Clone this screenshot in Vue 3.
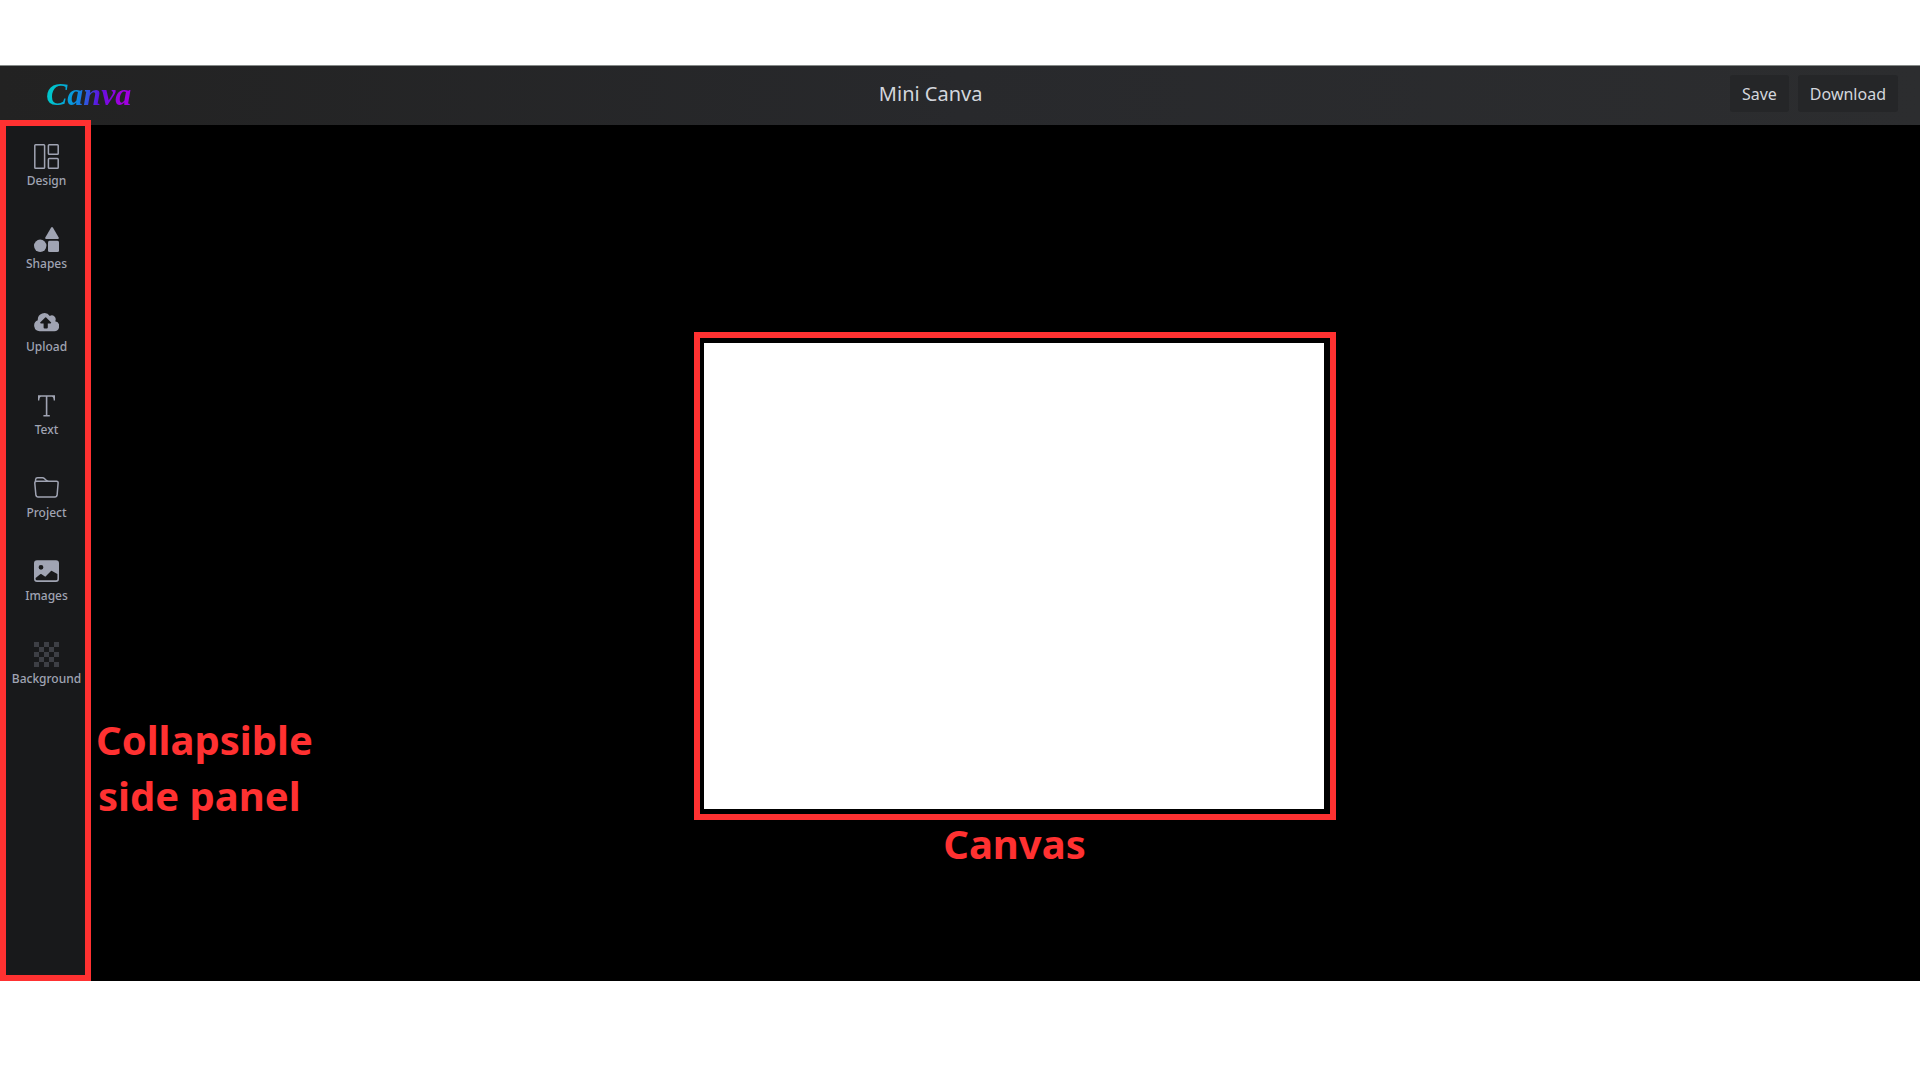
<script setup>
const tools = [
  { id: 'design', label: 'Design' },
  { id: 'shapes', label: 'Shapes' },
  { id: 'upload', label: 'Upload' },
  { id: 'text', label: 'Text' },
  { id: 'project', label: 'Project' },
  { id: 'images', label: 'Images' },
  { id: 'background', label: 'Background' },
]

// Filled squares of the 5 x 5 transparency checkerboard
const checks = Array.from({ length: 25 }, (_, i) => i)
  .filter((i) => i % 2 === 0)
  .map((i) => ({ x: (i % 5) * 5, y: Math.floor(i / 5) * 5 }))
</script>

<template>
  <div class="page">
    <header class="topbar">
      <a class="logo" href="#">Canva</a>
      <h1 class="title">Mini Canva</h1>
      <div class="actions">
        <button type="button">Save</button>
        <button type="button">Download</button>
      </div>
    </header>

    <div class="editor">
      <nav class="panel" aria-label="Tools">
        <button v-for="tool in tools" :key="tool.id" type="button" class="tool">
          <svg viewBox="0 0 25 25" aria-hidden="true">
            <g v-if="tool.id === 'design'" fill="none" stroke="currentColor" stroke-width="1.5">
              <rect x="0.8" y="0.8" width="9.8" height="23.4" rx="0.8" />
              <rect x="14.4" y="0.8" width="9.8" height="9.4" rx="0.8" />
              <rect x="14.4" y="14.6" width="9.8" height="9.6" rx="0.8" />
            </g>
            <g v-else-if="tool.id === 'shapes'" fill="currentColor">
              <path d="M17 .8Q18 -.6 19 .8L24.7 10.6Q25.2 12 23.8 12H12.2Q10.8 12 11.3 10.6Z" />
              <circle cx="6.2" cy="18.8" r="6.2" />
              <rect x="14" y="13.8" width="11" height="11.2" rx="1.5" />
            </g>
            <path
              v-else-if="tool.id === 'upload'"
              fill="currentColor"
              fill-rule="evenodd"
              d="M5.7 21.2A5.7 5.7 0 0 1 3.8 10.2A6.6 6.6 0 0 1 15.8 5.9A4 4 0 0 1 21.2 11.3A5 5 0 0 1 20 21.2ZM11.2 7.4L6.4 12.2Q5.7 13.2 6.8 13.4H9.6V17.4Q9.6 18.4 10.6 18.4H12.8Q13.8 18.4 13.8 17.4V13.4H16.5Q17.7 13.2 16.9 12.2L12.2 7.4Q11.7 7 11.2 7.4Z"
            />
            <path
              v-else-if="tool.id === 'text'"
              fill="currentColor"
              d="M4 2.2H21V7.5H19.7Q19.6 4 17.8 3.8H13.4V22H15.8V23.5H9.4V22H11.8V3.8H7.2Q5.4 4 5.3 7.5H4Z"
            />
            <g v-else-if="tool.id === 'project'" fill="none" stroke="currentColor" stroke-width="1.5">
              <path d="M2.7 5.2H22.5Q24.3 5.3 24.1 7.2L23.1 19.2Q22.9 20.9 21.2 20.9H3.8Q2.1 20.9 1.9 19.2L.8 7.2Q.7 5.3 2.7 5.2Z" />
              <path d="M1.5 5.7L1.6 3.5Q1.8 1.7 3.6 1.7H8.5Q9.6 1.7 10.4 2.5L11.6 3.7Q13 5.1 14.3 5.2" />
            </g>
            <path
              v-else-if="tool.id === 'images'"
              fill="currentColor"
              fill-rule="evenodd"
              d="M3 1.2H22Q25 1.2 25 4.2V19.9Q25 22.9 22 22.9H3Q0 22.9 0 19.9V4.2Q0 1.2 3 1.2ZM7 5.9A2.4 2.4 0 1 0 7 10.7A2.4 2.4 0 1 0 7 5.9ZM1.6 19V19.9Q1.6 21.3 3 21.3H22Q23.4 21.3 23.4 19.9V14.9L18 11.9Q17.5 11.7 17 12.1L11.3 17.8L7.2 15.1Q6.7 14.8 6.2 15.2Z"
            />
            <g v-else fill="#3d3f45">
              <rect v-for="c in checks" :key="`${c.x}-${c.y}`" :x="c.x" :y="c.y" width="5" height="5" />
            </g>
          </svg>
          <span>{{ tool.label }}</span>
        </button>
      </nav>

      <main class="workspace">
        <figure class="stage">
          <canvas class="artboard" width="620" height="466"></canvas>
          <figcaption class="note">Canvas</figcaption>
        </figure>
      </main>

      <p class="note panel-note">{{ 'Collapsible\nside panel ' }}</p>
    </div>
  </div>
</template>

<style>
body {
  margin: 0;
  background: #fff;
}
</style>

<style scoped>
.page {
  box-sizing: border-box;
  display: flex;
  flex-direction: column;
  min-height: 100vh;
  padding: 65px 0 99px;
  font-family: 'Noto Sans', 'Open Sans', sans-serif;
}

.topbar {
  box-sizing: border-box;
  display: flex;
  align-items: center;
  justify-content: space-between;
  height: 60px;
  padding: 0 22px 4px 46px;
  border-top: 1px solid #858a88;
  background: linear-gradient(90deg, #222222, #28292c 50%, #2c2d2f);
}

.logo {
  background: linear-gradient(100deg, #00c4cc 10%, #0a8ee0 38%, #6010e0 62%, #a000e0 85%);
  background-clip: text;
  color: transparent;
  font: italic bold 32px/40px 'Liberation Serif', serif;
  text-decoration: none;
}

.title {
  margin: 0;
  color: #d3d6dc;
  font-size: 20px;
  font-weight: 400;
  line-height: 24px;
}

.actions {
  display: flex;
  gap: 9px;
}

.actions button {
  height: 37px;
  padding: 0 12px;
  border: 0;
  border-radius: 3px;
  background: #252628;
  color: #d3d6dc;
  font: inherit;
  font-size: 16px;
}

.editor {
  position: relative;
  display: flex;
  flex: 1;
  background: #000;
}

.panel {
  box-sizing: border-box;
  display: flex;
  flex: none;
  flex-direction: column;
  gap: 38px;
  width: 79px;
  margin: 1px 6px 6px;
  padding: 18px 0 18px 2px;
  outline: 6px solid #ff3131;
  background: #18191b;
}

.tool {
  display: flex;
  flex-direction: column;
  align-items: center;
  gap: 4px;
  padding: 0;
  border: 0;
  background: none;
  color: #a0a4b3;
  font: inherit;
  font-size: 12px;
  font-weight: 500;
  line-height: 16px;
}

.tool svg {
  width: 25px;
  height: 25px;
}

.workspace {
  display: flex;
  flex: 1;
  justify-content: center;
  padding: 207px 0 0 18px;
}

.stage {
  margin: 0;
}

.artboard {
  display: block;
  padding: 5px 6px 5px 4px;
  border: 6px solid #ff3131;
  background: #fff content-box;
}

.note {
  margin: 0;
  color: #ff3131;
  font-size: 40px;
  font-weight: 700;
  line-height: 56px;
  text-align: center;
}

.stage .note {
  line-height: 48px;
}

.panel-note {
  position: absolute;
  top: 587px;
  left: 96px;
  white-space: pre;
}
</style>
